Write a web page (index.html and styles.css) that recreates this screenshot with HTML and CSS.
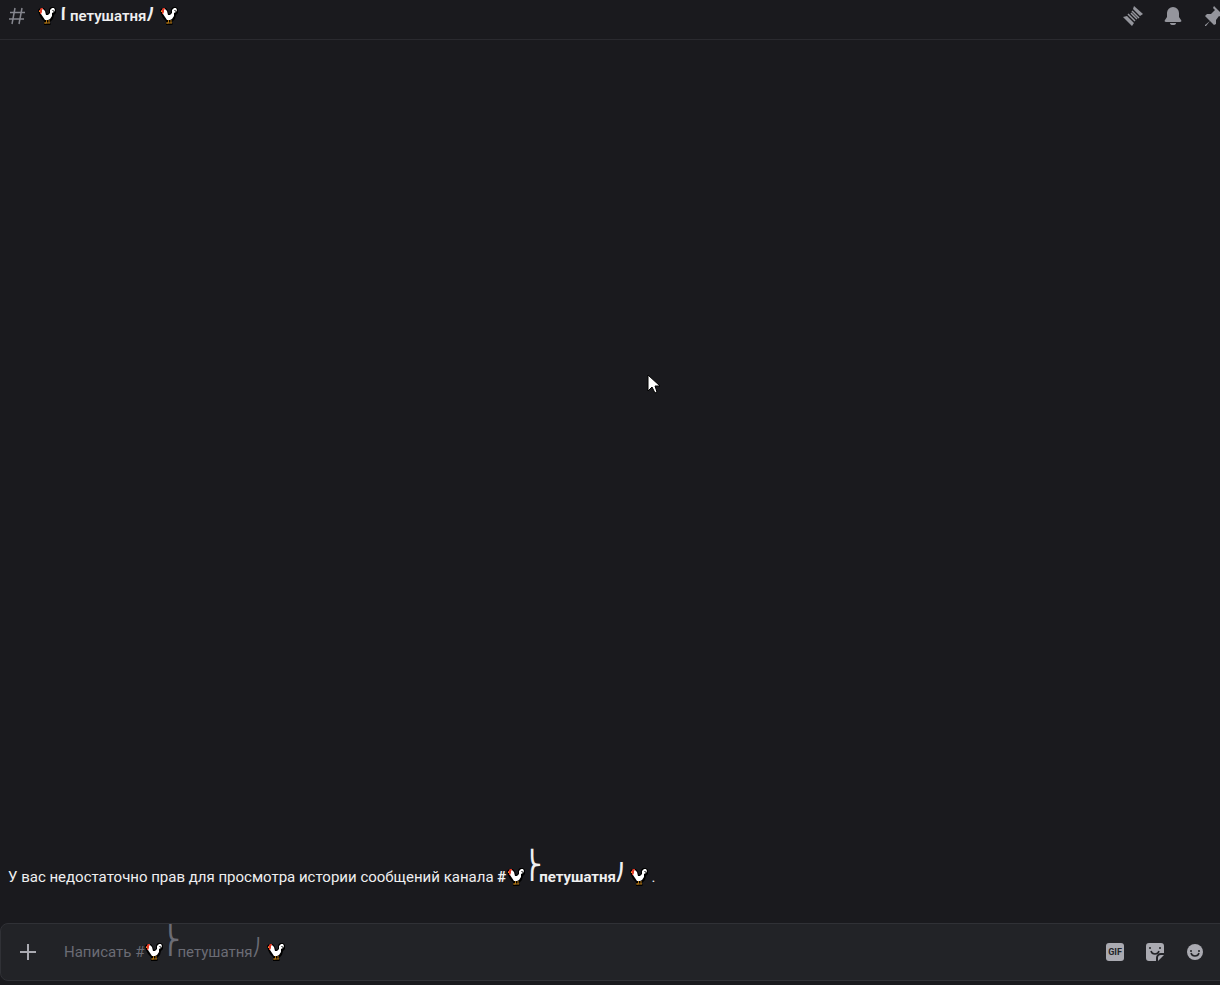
FILE: index.html
```
<!DOCTYPE html>
<html lang="ru">
<head>
  <meta charset="utf-8">
  <title>петушатня</title>
  <link rel="stylesheet" href="styles.css">
</head>
<body>
  <!-- shared emoji -->
  <svg class="sprite" aria-hidden="true">
    <symbol id="rooster" viewBox="0 0 18 18">
      <path fill="#000" d="M0 3l2-2h4l2 3 1 3 2-1 0-4 2-2h3l2 2v4l-2 2-1 4-3 3v1l1 1-1 1H6v-4L3 11 1 7z"/>
      <path fill="#fff" d="M3 2h2l2 2 1 4h2l2-2V3l2-2h2l1 2-1 2-2 1v3l-2 3-2 1H7l-2-3-2-3z"/>
      <path fill="#e03c28" d="M2 2l1-1h2v1L4 3v2L3 7H2V5H1V3h1z"/>
      <path fill="#f5a623" d="M1 4h1v1H1z"/>
      <path fill="none" stroke="#777" d="M14 3.5h2M15.5 3v2"/>
      <path fill="none" stroke="#b07414" d="M8.5 13v3H6m5-3v3h1m-5 0h4"/>
    </symbol>
  </svg>

  <div class="chat">
    <header class="header">
      <svg class="hash" viewBox="0 0 20 20"><path d="M8 2L5 18M15 2l-3 16M3 6.5h15M2 13h15"/></svg>
      <h1 class="title"><svg class="emoji"><use href="#rooster"/></svg><span class="brace open">⎬</span>петушатня<span class="brace close">⎠</span><svg class="emoji"><use href="#rooster"/></svg></h1>
      <div class="tools">
        <button class="tool" aria-label="Ветки">
          <svg viewBox="0 0 24 24"><path d="M2 13l4-1 7 7-2 3zM13 2l9 8-3 2-7-7z"/><path class="line" d="M7 10l7 7M10 9l6 6M11 7l7 7"/></svg>
        </button>
        <button class="tool" aria-label="Уведомления">
          <svg viewBox="0 0 24 24"><path d="M12 3a6 6 0 0 0-6 6v4l-2 3c-1 1 0 2 1 2h14c1 0 2-1 1-2l-2-3V9a6 6 0 0 0-6-6zM9 19h6a3 2 0 0 1-6 0z"/></svg>
        </button>
        <button class="tool" aria-label="Закреплённые сообщения">
          <svg viewBox="0 0 24 24"><path d="M13 2l9 9-2 2-2-1-3 4v4l-2 1-4-4-4 5H4v-1l5-4-5-5 2-2h4l4-4-2-2z"/></svg>
        </button>
      </div>
    </header>

    <main class="messages">
      <p class="notice">У вас недостаточно прав для просмотра истории сообщений канала <strong>#<svg class="emoji"><use href="#rooster"/></svg><span class="brace open">⎬</span>петушатня<span class="brace close">⎠</span><svg class="emoji"><use href="#rooster"/></svg></strong> .</p>
    </main>

    <form class="composer">
      <button class="attach" type="button" aria-label="Прикрепить">
        <svg viewBox="0 0 20 20"><path d="M10 2v16M2 10h16"/></svg>
      </button>
      <div class="field">
        <input type="text" id="message" class="input">
        <label for="message" class="placeholder">Написать #<svg class="emoji"><use href="#rooster"/></svg><span class="brace open">⎬</span>петушатня<span class="brace close">⎠</span><svg class="emoji"><use href="#rooster"/></svg></label>
      </div>
      <button class="pick gif" type="button"><span>GIF</span></button>
      <button class="pick" type="button" aria-label="Стикеры">
        <svg viewBox="0 0 20 20"><path d="M4 1h12a3 3 0 0 1 3 3v7h-3a5 5 0 0 0-5 5v3H4a3 3 0 0 1-3-3V4a3 3 0 0 1 3-3zM19 13l-6 6v-3a3 3 0 0 1 3-3z"/><path class="face" d="M6 9c1 4 7 4 8 0"/><circle class="eye" cx="5" cy="6" r="1"/><circle class="eye" cx="15" cy="6" r="1"/></svg>
      </button>
      <button class="pick" type="button" aria-label="Эмодзи">
        <svg viewBox="0 0 20 20"><circle cx="10" cy="10" r="8"/><path class="face" d="M6 11c1 4 7 4 8 0"/><circle class="eye" cx="6" cy="9" r="1"/><circle class="eye" cx="14" cy="9" r="1"/></svg>
      </button>
    </form>
  </div>

  <svg class="cursor" viewBox="0 0 13 20"><path d="M1 1v16l4-4 3 6 2-1-2-6h5z"/></svg>
</body>
</html>
```
FILE: styles.css
```
* {
  box-sizing: border-box;
}
body {
  margin: 0;
  background: #1a1a1e;
  color: #efeff0;
  font: 15px/20px Roboto, sans-serif;
  overflow: hidden;
}
button {
  display: flex;
  align-items: center;
  justify-content: center;
  padding: 0;
  border: 0;
  background: none;
  flex: none;
}
.sprite {
  position: absolute;
  width: 0;
  height: 0;
}
.chat {
  display: flex;
  flex-direction: column;
  height: 100vh;
  padding-bottom: 4px;
}
.emoji {
  width: 18px;
  height: 18px;
  margin-left: 1px;
  vertical-align: -4px;
}
/* tall glyphs, must not stretch the line */
.brace {
  display: inline-flex;
  margin-top: -10px;
  font-family: "DejaVu Sans", sans-serif;
  line-height: 0;
}
.open {
  justify-content: center;
  width: 14px;
  font-size: 27px;
  font-weight: normal;
  vertical-align: 8px;
}
.close {
  justify-content: flex-end;
  width: 8px;
  margin-right: 5px;
  font-size: 17px;
  vertical-align: 4px;
}

/* header */
.header {
  display: flex;
  align-items: center;
  height: 40px;
  padding: 0 0 8px 7px;
  border-bottom: 1px solid #2a2a2f;
}
.hash {
  width: 20px;
  height: 20px;
  fill: none;
  stroke: #85868e;
  stroke-width: 1.5;
}
.title {
  flex: 1;
  margin: 0 0 0 10px;
  font-size: 15px;
  font-weight: 600;
  line-height: 18px;
  overflow: hidden;
}
.tools {
  display: flex;
  gap: 16px;
  margin-right: -5px;
}
.tool svg {
  width: 24px;
  height: 24px;
  fill: #94959c;
}
.tool .line {
  stroke: #94959c;
  stroke-width: 1.5;
}

/* history */
.messages {
  flex: 1;
  display: flex;
  flex-direction: column;
  justify-content: flex-end;
  padding: 0 8px 36px;
}
.notice {
  margin: 0;
}

/* message box */
.composer {
  display: flex;
  align-items: center;
  height: 58px;
  margin-right: -8px;
  padding: 0 12px 0 7px;
  border: 1px solid #303136;
  border-radius: 8px;
  background: #222327;
}
.attach svg {
  width: 20px;
  height: 20px;
  margin: 0 10px;
  fill: none;
  stroke: #aaaab1;
  stroke-width: 2;
}
.field {
  position: relative;
  flex: 1;
  height: 56px;
  margin-left: 16px;
  overflow: hidden;
}
.input {
  width: 100%;
  height: 56px;
  padding: 0;
  border: 0;
  outline: 0;
  background: none;
  color: inherit;
  font: inherit;
}
.placeholder {
  position: absolute;
  top: 18px;
  left: 0;
  color: #6b6c75;
  pointer-events: none;
  white-space: nowrap;
}
.pick {
  width: 40px;
  height: 40px;
}
.pick svg {
  width: 20px;
  height: 20px;
  fill: #aaaab1;
}
.pick .face {
  fill: none;
  stroke: #222327;
  stroke-width: 1.5;
}
.pick .eye {
  fill: #222327;
}
.gif span {
  width: 18px;
  border-radius: 3px;
  background: #aaaab1;
  color: #222327;
  font: bold 9px/18px Roboto, sans-serif;
}

.cursor {
  position: absolute;
  top: 374px;
  left: 647px;
  width: 13px;
  height: 20px;
  fill: #fff;
  stroke: #000;
}
```
